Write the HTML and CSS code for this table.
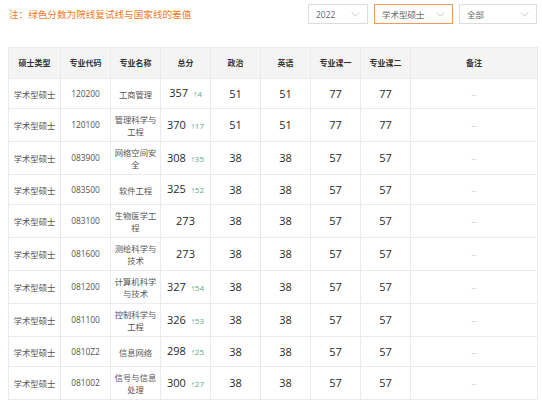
FILE: index.html
```html
<!DOCTYPE html>
<html lang="zh-CN">
<head>
<meta charset="utf-8">
<link rel="stylesheet" href="styles.css">
</head>
<body>
<div class="page">
  <div class="topbar">
    <div class="note">注：绿色分数为院线复试线与国家线的差值</div>
    <div class="filters">
      <div class="sel sel-year"><span>2022</span><svg class="chev" viewBox="0 0 10 6" width="9" height="5"><path d="M0.5 0.5 L5 5 L9.5 0.5" fill="none" stroke="#b5b5b5" stroke-width="0.9"/></svg></div>
      <div class="sel sel-type active"><span>学术型硕士</span><svg class="chev" viewBox="0 0 10 6" width="9" height="5"><path d="M0.5 0.5 L5 5 L9.5 0.5" fill="none" stroke="#b5b5b5" stroke-width="0.9"/></svg></div>
      <div class="sel sel-all"><span>全部</span><svg class="chev" viewBox="0 0 10 6" width="9" height="5"><path d="M0.5 0.5 L5 5 L9.5 0.5" fill="none" stroke="#b5b5b5" stroke-width="0.9"/></svg></div>
    </div>
  </div>
  <table class="grid">
    <colgroup>
      <col class="c-type"><col class="c-code"><col class="c-name"><col class="c-total"><col class="c-n"><col class="c-n"><col class="c-n"><col class="c-n"><col class="c-rem">
    </colgroup>
    <thead>
      <tr><th>硕士类型</th><th>专业代码</th><th>专业名称</th><th>总分</th><th>政治</th><th>英语</th><th>专业课一</th><th>专业课二</th><th>备注</th></tr>
    </thead>
    <tbody>
      <tr><td class="t">学术型硕士</td><td class="t code">120200</td><td class="t nm">工商管理</td><td class="s">357<span class="d">↑4</span></td><td class="n">51</td><td class="n">51</td><td class="n">77</td><td class="n">77</td><td class="r">--</td></tr>
      <tr><td class="t">学术型硕士</td><td class="t code">120100</td><td class="t nm">管理科学与工程</td><td class="s">370<span class="d">↑17</span></td><td class="n">51</td><td class="n">51</td><td class="n">77</td><td class="n">77</td><td class="r">--</td></tr>
      <tr><td class="t">学术型硕士</td><td class="t code">083900</td><td class="t nm">网络空间安全</td><td class="s">308<span class="d">↑35</span></td><td class="n">38</td><td class="n">38</td><td class="n">57</td><td class="n">57</td><td class="r">--</td></tr>
      <tr><td class="t">学术型硕士</td><td class="t code">083500</td><td class="t nm">软件工程</td><td class="s">325<span class="d">↑52</span></td><td class="n">38</td><td class="n">38</td><td class="n">57</td><td class="n">57</td><td class="r">--</td></tr>
      <tr><td class="t">学术型硕士</td><td class="t code">083100</td><td class="t nm">生物医学工程</td><td class="s">273</td><td class="n">38</td><td class="n">38</td><td class="n">57</td><td class="n">57</td><td class="r">--</td></tr>
      <tr><td class="t">学术型硕士</td><td class="t code">081600</td><td class="t nm">测绘科学与技术</td><td class="s">273</td><td class="n">38</td><td class="n">38</td><td class="n">57</td><td class="n">57</td><td class="r">--</td></tr>
      <tr><td class="t">学术型硕士</td><td class="t code">081200</td><td class="t nm">计算机科学与技术</td><td class="s">327<span class="d">↑54</span></td><td class="n">38</td><td class="n">38</td><td class="n">57</td><td class="n">57</td><td class="r">--</td></tr>
      <tr><td class="t">学术型硕士</td><td class="t code">081100</td><td class="t nm">控制科学与工程</td><td class="s">326<span class="d">↑53</span></td><td class="n">38</td><td class="n">38</td><td class="n">57</td><td class="n">57</td><td class="r">--</td></tr>
      <tr><td class="t">学术型硕士</td><td class="t code">0810Z2</td><td class="t nm">信息网络</td><td class="s">298<span class="d">↑25</span></td><td class="n">38</td><td class="n">38</td><td class="n">57</td><td class="n">57</td><td class="r">--</td></tr>
      <tr><td class="t">学术型硕士</td><td class="t code">081002</td><td class="t nm">信号与信息处理</td><td class="s">300<span class="d">↑27</span></td><td class="n">38</td><td class="n">38</td><td class="n">57</td><td class="n">57</td><td class="r">--</td></tr>
    </tbody>
  </table>
</div>
</body>
</html>
```
FILE: styles.css
```css
html, body {
  margin: 0;
  padding: 0;
  background: #ffffff;
}
body {
  font-family: "Noto Sans CJK SC", "Noto Sans", sans-serif;
  color: #333;
}
.page {
  padding: 4px 5px 0 8px;
}
.topbar {
  display: flex;
  justify-content: space-between;
  align-items: center;
  height: 20px;
}
.note {
  font-size: 9.6px;
  color: #f07a26;
  padding-left: 1px;
  margin-top: -1px;
}
.filters {
  display: flex;
  gap: 6px;
}
.sel {
  box-sizing: border-box;
  height: 20px;
  border: 1px solid #dcdcdc;
  display: flex;
  align-items: center;
  justify-content: space-between;
  padding: 0 7px 0 7px;
  font-size: 8.5px;
  color: #666;
  background: #fff;
}
.sel-year { width: 60px; font-family: "Open Sans", "Noto Sans CJK SC", sans-serif; }
.sel-type { width: 79px; }
.sel-all { width: 78px; }
.sel.active { border-color: #ec9a5c; }
.chev { display: block; }

.grid {
  margin-top: 23px;
  border-collapse: collapse;
  table-layout: fixed;
  width: 529px;
}
.c-type { width: 52px; }
.c-code, .c-name, .c-total, .c-n { width: 50px; }
.c-rem { width: 127px; }
.grid th, .grid td {
  border: 1px solid #ebebeb;
  text-align: center;
  vertical-align: middle;
  padding: 4px 2px;
}
.grid th {
  background: #f4f4f4;
  height: 22px;
  font-size: 8px;
  line-height: 12px;
  font-weight: bold;
  color: #333;
}
.grid td {
  height: 21px;
}
.grid td.t {
  font-size: 8.3px;
  line-height: 12px;
  color: #555;
}
.grid td.code {
  font-family: "Open Sans", "Noto Sans CJK SC", sans-serif;
  font-size: 8.4px;
}
.grid td.nm {
  padding: 4px 1px;
}
.grid td.s {
  font-family: "Open Sans", "Noto Sans", sans-serif;
  font-size: 11px;
  line-height: 14px;
  color: #2a2a2a;
  white-space: nowrap;
  padding: 4px 0;
}
.grid td.n {
  font-family: "Open Sans", "Noto Sans", sans-serif;
  font-size: 11px;
  line-height: 14px;
  color: #2a2a2a;
}
.d {
  font-family: "Open Sans", "Noto Sans", sans-serif;
  font-size: 8px;
  color: #5aa882;
  margin-left: 5px;
}
.grid td.r {
  font-size: 7px;
  color: #aaa;
}
```
